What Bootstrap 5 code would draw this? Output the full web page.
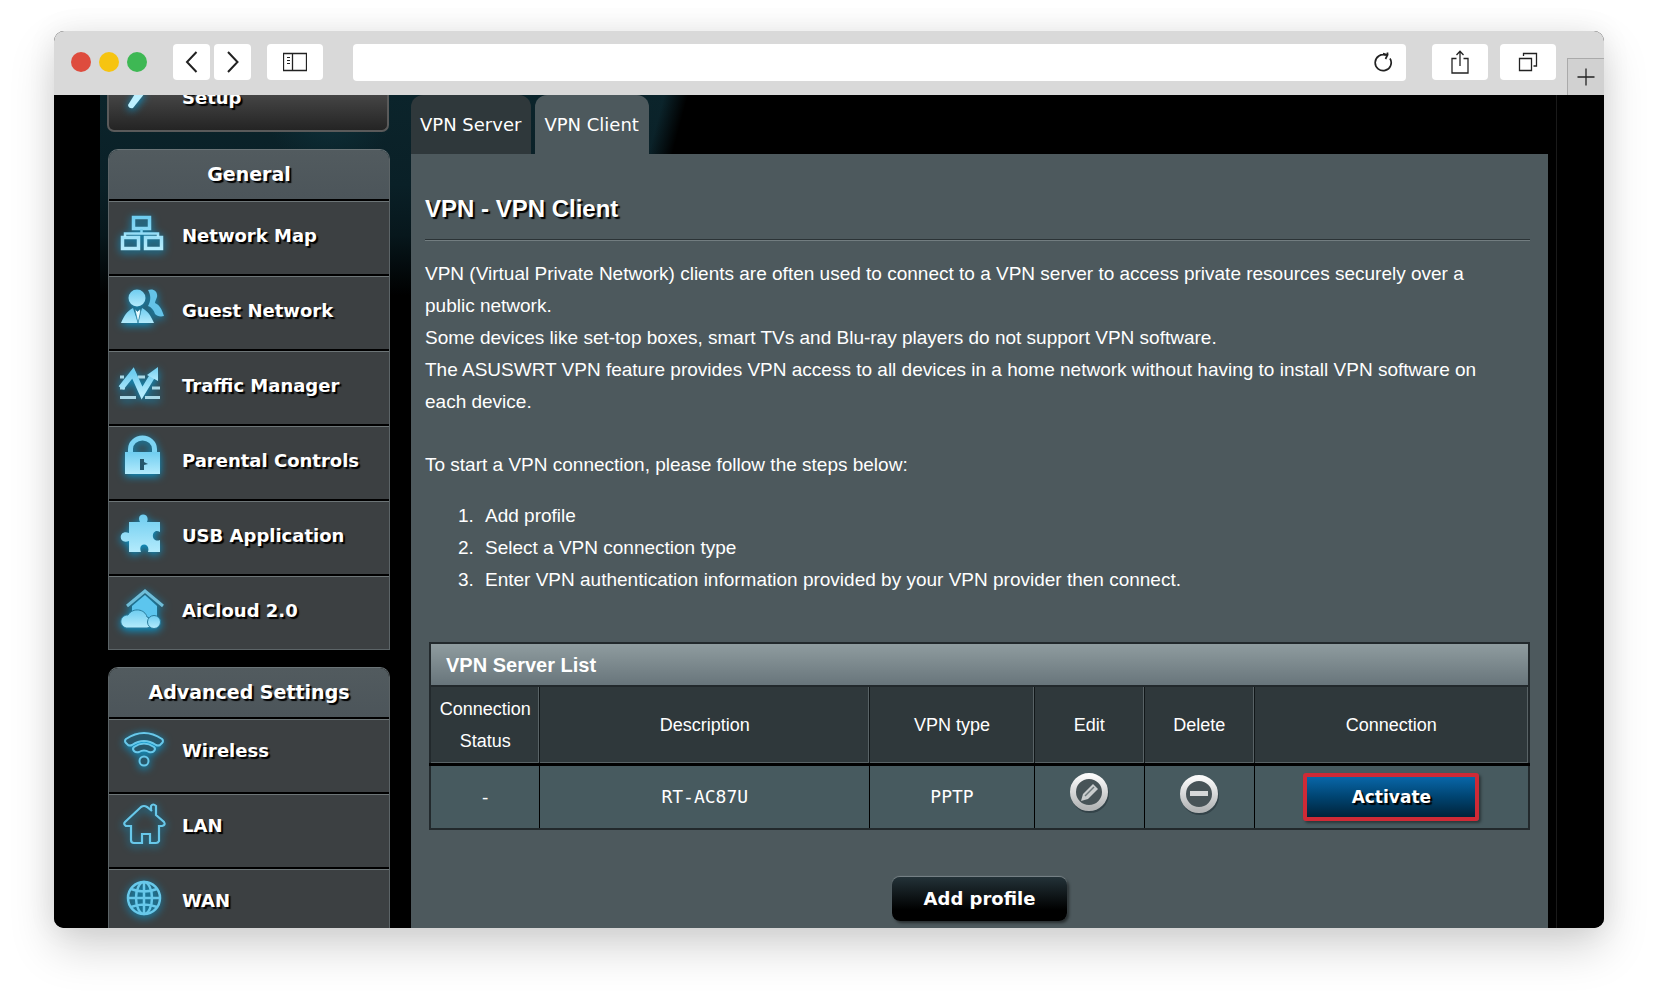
<!DOCTYPE html>
<html lang="en">
<head>
<meta charset="utf-8">
<meta name="viewport" content="width=device-width, initial-scale=1">
<title>VPN - VPN Client</title>
<link href="https://cdn.jsdelivr.net/npm/bootstrap@5.3.0/dist/css/bootstrap.min.css" rel="stylesheet">
<style>
  body { background: #fff; font-family: "Liberation Sans", Arial, sans-serif; height: 100vh; overflow: hidden; }
  .stage { height: 100vh; padding: 31px 54px 78px; }
  .browser { border-radius: 10px; overflow: hidden; background: #000; }
  .browser-shadow { border-radius: 10px; box-shadow: 0 20px 45px rgba(0,0,0,.17), 0 0 30px rgba(0,0,0,.07); height: 100%; }
  .toolbar { background: #d9d9d9; height: 64px; padding: 0 0 2px 17px; }
  .dot { width: 20px; height: 20px; border-radius: 50%; }
  .dot-red { background: #de4c3e; } .dot-yellow { background: #f6c411; } .dot-green { background: #3eb854; }
  .nav-tools { margin-left: 26px; }
  .tool { background: #fff; border: 0; border-radius: 4px; height: 36px; padding: 0; color: #222; display: flex; align-items: center; justify-content: center; }
  .tool-sm { width: 37px; } .tool-lg { width: 56px; }
  .address { height: 37px; background: #fff; border-radius: 4px; margin: 0 26px 0 30px; }
  .address input { border: 0; background: transparent; outline: 0; height: 100%; padding: 0 12px; }
  .address button { border: 0; background: transparent; padding: 0; margin-right: 13px; display: flex; }
  .newtab { width: 37px; height: 37px; margin: 0 0 -2px 11px; background: #d1d1d1; border: solid #aaa; border-width: 1px 0 0 1px; padding: 0; display: flex; align-items: center; justify-content: center; }

  .viewport { background: #000; padding: 0 47px 0 46px; min-height: 0; }
  .page { overflow: hidden; border-right: 1px solid #1a1a1a; padding: 0 8px;
    background:
      linear-gradient(105deg, transparent 545px, #000 568px),
      radial-gradient(ellipse 60px 40px at 230px 30px, #0d2d36, transparent),
      linear-gradient(180deg, #0b242b 0, #0a2027 90px, #07171c 140px, #000 200px); }
  .sidebar { width: 282px; flex: none; margin: -39px 21px 0 0; }
  .menu-block { border: 1px solid #5c6467; border-top-color: #6b7477; border-radius: 10px 10px 0 0; overflow: hidden; }
  .menu-block + .menu-block { margin-top: 17px; }
  .menu-head { background: linear-gradient(#525b5f, #4c555a); color: #fff; font: bold 19px/48px "DejaVu Sans", Verdana, sans-serif; height: 49px; text-align: center; margin: 0; text-shadow: 2px 2px 1px #000; }
  .menu-link { height: 75px; display: flex; align-items: center; background: #3c4042; border-top: 2px solid #000; box-shadow: inset 0 1px #6d7577; color: #fff; text-decoration: none; font: bold 18px/24px "DejaVu Sans", Verdana, sans-serif; text-shadow: 2px 2px 1px #000; padding: 0 0 4px 9px; }
  .menu-link:hover { color: #fff; }
  .menu-link svg { width: 48px; height: 48px; margin: 0 16px 4px 0; flex: none; overflow: visible; filter: drop-shadow(0 2px 4px #0798cf); }
  .menu-advanced .menu-link { padding-bottom: 9px; }
  .setup { height: 76px; margin: 0 1px 17px -1px; border: 2px solid #5a5a5a; border-radius: 0 0 7px 7px; background: linear-gradient(#555 30%, #242424); box-shadow: none; padding: 9px 0 0 9px; border-top: 0; }
  .setup svg { margin-bottom: 14px; }

  .router-tab { background: #2f383b; color: #fff; text-decoration: none; height: 59px; padding: 0 10px 0 9px; border-radius: 12px 12px 0 0; font: 18px/60px "DejaVu Sans", Verdana, sans-serif; white-space: nowrap; }
  .router-tab.current { background: #4d595d; }
  .router-tab:hover { color: #fff; }
  .panel { background: #4d595d; color: #fff; padding: 39px 18px 0 14px; }
  .panel h1 { font-size: 24px; line-height: 32px; font-weight: bold; margin: 0 0 14px; text-shadow: 2px 2px 1px #000; }
  .rule { border-top: 1px solid #2b3336; border-bottom: 1px solid #727d80; margin-bottom: 17px; }
  .copy { font-size: 19px; line-height: 32px; margin-bottom: 31px; padding-right: 20px; }
  .steps { font-size: 19px; line-height: 32px; margin: -12px 0 46px; padding-left: 54px; }
  .steps li { padding-left: 6px; }

  .servers { table-layout: fixed; border-collapse: collapse; margin: 0 0 0 4px; width: calc(100% - 4px); border: 2px solid #22292c; color: #fff; text-align: center; }
  .servers caption { caption-side: top; padding: 0 0 0 15px; height: 43px; color: #fff; font: bold 20px/42px "Liberation Sans", Arial, sans-serif; background: linear-gradient(#8f9c9f, #68757b); border: 2px solid #22292c; border-bottom: 0; text-align: left; }
  .servers th { background: #2f383b; font-weight: normal; font-size: 18px; line-height: 32px; height: 78px; padding: 0; border: 1px solid #111719; box-shadow: inset -1px -1px #596366; }
  .servers td { background: #475a5f; font: 18px/24px "DejaVu Sans Mono", monospace; height: 65px; padding: 0; border: 1px solid #000; border-top-width: 3px; }
  .round-btn { border: 0; background: transparent; padding: 0; width: 44px; height: 44px; }
  .round-btn svg { display: block; }
  .btn-activate { width: 176px; height: 48px; border: 4px solid #cf2a36; border-radius: 3px; background: linear-gradient(#0866a8, #004471 50%, #00233a); color: #fff; font: bold 17px/38px "DejaVu Sans", Verdana, sans-serif; padding: 0; text-shadow: 2px 2px 1px #000; box-shadow: 2px 2px 3px rgba(0,0,0,.4); }
  .add-row { padding-left: 4px; }
  .btn-add { width: 175px; height: 44px; margin-top: 47px; border: 0; border-radius: 8px; background: linear-gradient(#233238, #000 75%); color: #fff; font: bold 18px/44px "DejaVu Sans", Verdana, sans-serif; padding: 0; box-shadow: 0 -1px 1px #7b868a, 2px 2px 3px rgba(0,0,0,.5); }
</style>
<script src="https://cdn.jsdelivr.net/npm/bootstrap@5.3.0/dist/js/bootstrap.bundle.min.js"></script>
</head>
<body>
<svg width="0" height="0" class="position-absolute" aria-hidden="true">
  <defs>
    <linearGradient id="ice" x1="0" y1="0" x2="0" y2="1"><stop offset="0" stop-color="#6fcdf0"/><stop offset="1" stop-color="#b4ebfc"/></linearGradient>
    <linearGradient id="steel" x1="0" y1="0" x2="0" y2="1"><stop offset="0" stop-color="#fafafa"/><stop offset="1" stop-color="#b3b5b6"/></linearGradient>
  </defs>
</svg>
<div class="stage">
<div class="browser-shadow">
<div class="browser d-flex flex-column h-100">
  <header class="toolbar d-flex align-items-center flex-shrink-0">
    <div class="d-flex gap-2">
      <span class="dot dot-red"></span><span class="dot dot-yellow"></span><span class="dot dot-green"></span>
    </div>
    <div class="nav-tools d-flex">
      <button class="tool tool-sm me-1" aria-label="Back"><svg width="14" height="22" fill="none" stroke="#222" stroke-width="2"><path d="M11.500 1 2 11l9.500 10"/></svg></button>
      <button class="tool tool-sm me-3" aria-label="Forward"><svg width="14" height="22" fill="none" stroke="#222" stroke-width="2"><path d="M2 1l9.500 10L2 21"/></svg></button>
      <button class="tool tool-lg" aria-label="Sidebar"><svg width="24" height="20" fill="none" stroke="#222"><path d="M.5 1.500h23v17H.5zM9.500 1.500v17" stroke-width="1.300"/><path d="M4 5.500h3M4 8.500h3M4 11.500h3"/></svg></button>
    </div>
    <div class="address flex-grow-1 d-flex align-items-center">
      <input class="flex-grow-1" type="text" aria-label="Address">
      <button aria-label="Reload"><svg width="20" height="22" fill="none" stroke="#222" stroke-width="1.700"><path d="M17 7.500A8 8 0 1 1 13 4.200M10 2.500l4.500 1.500-2 4M14.500 1.500v3"/></svg></button>
    </div>
    <button class="tool tool-lg me-2" aria-label="Share"><svg width="18" height="24" fill="none" stroke="#222" stroke-width="1.300"><path d="M5.500 8.500H1v14.500h16V8.500h-4.500M9 16V1.500M5.500 5 9 1.200 12.500 5"/></svg></button>
    <button class="tool tool-lg ms-1" aria-label="Show tabs"><svg width="20" height="20" fill="none" stroke="#222" stroke-width="1.300"><path d="M1.500 6.500h12v12h-12zM5.500 4V1.500h13v12.500H15.500"/></svg></button>
    <button class="newtab align-self-end" aria-label="New tab"><svg width="18" height="18" stroke="#222" stroke-width="1.300"><path d="M9 .5v17M.5 9h17"/></svg></button>
  </header>

  <div class="viewport flex-grow-1 d-flex">
    <div class="page flex-grow-1 d-flex">
      <nav class="sidebar" aria-label="Router menu">
        <a href="#" class="menu-link setup"><svg viewBox="0 0 48 48"><path d="M10 38q1 4 5 3L27 26l-7-4z" fill="#bdf0ff"/></svg>Setup</a>
        <div class="menu-block">
          <h2 class="menu-head">General</h2>
          <a href="#" class="menu-link"><svg viewBox="0 0 48 48"><g fill="none" stroke="url(#ice)" stroke-width="3.500"><path d="M15.500 7.500h16v11h-16zM4.500 27.500h16v11h-16zM27.500 27.500h16v11h-16z"/><path d="M23.500 19v5M7 27v-3.500h33V27" stroke-width="2.500"/></g></svg>Network Map</a>
          <a href="#" class="menu-link"><svg viewBox="0 0 48 48"><path d="M30 5c6-2 10 2 9 7-1 3-2 4-2 6 5 2 7 7 9 13-4 1-7 0-9-2-1-4-4-7-7-8 3-5 3-11 0-16z" fill="#64c3e8"/><g fill="url(#ice)"><circle cx="19" cy="13" r="8.500"/><path d="M3 38c3-7 6-12 12-15l5 15zM36 38c-3-7-6-12-12-15l-4 15z"/></g><path d="m17 24 2.500 2.500L22 24l.5 3-2.500 11-2.500-11z" fill="#e8fbff" stroke="#2b7f9f" stroke-width=".7"/></svg>Guest Network</a>
          <a href="#" class="menu-link"><svg viewBox="0 0 48 48"><path d="M2 37.500h16M27 37.500h15M2 28h5M34 28h8M2 17h4M20 17h7" stroke="#a9d8e6" stroke-width="3"/><path d="M3 28 15 13l9 20L35 15" fill="none" stroke="url(#ice)" stroke-width="6"/><path d="m29 15 11-8v14z" fill="url(#ice)"/></svg>Traffic Manager</a>
          <a href="#" class="menu-link"><svg viewBox="0 0 48 48"><path d="M12.500 20v-6a12 11 0 0 1 24 0v6" fill="none" stroke="#7cd3f2" stroke-width="5"/><path d="M7 17h35v22H7z" fill="url(#ice)"/><path d="M22 24h4v3l4 2-4 1v5h-4z" fill="#26576b"/></svg>Parental Controls</a>
          <a href="#" class="menu-link"><svg viewBox="0 0 48 48"><path d="M11 12h11c-5-10 11-10 7 0h13v10c-9-5-10 12 0 8v12H30c3-10-11-10-7 0H11V31c-11 4-11-12 0-8z" fill="url(#ice)"/></svg>USB Application</a>
          <a href="#" class="menu-link"><svg viewBox="0 0 48 48"><path d="m9 21 18-15 18 15" fill="none" stroke="#6fbdd8" stroke-width="3"/><path d="M14 21 27 10l12 11v12H14z" fill="#5cc5ee"/><path d="M8 43c-8-3-6-13 2-13 5-8 17-6 19 2 6 1 6 11 0 11z" fill="url(#ice)" stroke="#287b9c"/><circle cx="36" cy="37" r="6.500" fill="url(#ice)" stroke="#287b9c"/></svg>AiCloud 2.0</a>
        </div>
        <div class="menu-block menu-advanced">
          <h2 class="menu-head">Advanced Settings</h2>
          <a href="#" class="menu-link"><svg viewBox="0 0 48 48"><g fill="#27586c" stroke="#68c8ea" stroke-width="2"><path d="M8 18q-2-2 0-4 18-12 36 0 2 2 0 4l-2 2q-2 1-4 0-12-8-24 0-2 1-4 0z"/><path d="M16 26q-2-2 0-4 10-7 20 0 2 2 0 4-2 2-5 1-5-3-10 0-3 1-5-1z"/><circle cx="26" cy="36" r="4.500"/></g></svg>Wireless</a>
          <a href="#" class="menu-link"><svg viewBox="0 0 48 48"><path d="M33 10V6q2-3 5 0v9l8 7q2 3-2 4h-3v15q-1 2-3 2h-6V34h-8v9h-8q-3 0-3-3V26H8q-3-2-1-4L23 7q3-2 6 0l5 4" fill="none" stroke="#68c8ea" stroke-width="2.200"/></svg>LAN</a>
          <a href="#" class="menu-link"><svg viewBox="0 0 48 48"><g fill="none" stroke="#68c8ea" stroke-width="2.500"><circle cx="26" cy="23" r="16"/><ellipse cx="26" cy="23" rx="8" ry="16"/><path d="M26 7v32M10 23h32M13 14q13 5 26 0M13 32q13-5 26 0"/></g></svg>WAN</a>
        </div>
      </nav>

      <main class="flex-grow-1 d-flex flex-column">
        <div class="d-flex gap-1">
          <a href="#" class="router-tab">VPN Server</a>
          <a href="#" class="router-tab current" aria-current="page">VPN Client</a>
        </div>
        <section class="panel flex-grow-1">
          <h1>VPN - VPN Client</h1>
          <div class="rule"></div>
          <p class="copy">VPN (Virtual Private Network) clients are often used to connect to a VPN server to access private resources securely over a public network.<br>Some devices like set-top boxes, smart TVs and Blu-ray players do not support VPN software.<br>The ASUSWRT VPN feature provides VPN access to all devices in a home network without having to install VPN software on each device.</p>
          <p class="copy">To start a VPN connection, please follow the steps below:</p>
          <ol class="steps">
            <li>Add profile</li>
            <li>Select a VPN connection type</li>
            <li>Enter VPN authentication information provided by your VPN provider then connect.</li>
          </ol>
          <table class="servers">
            <caption>VPN Server List</caption>
            <colgroup><col style="width:10%"><col style="width:30%"><col style="width:15%"><col style="width:10%"><col style="width:10%"><col style="width:25%"></colgroup>
            <thead><tr><th scope="col">Connection Status</th><th scope="col">Description</th><th scope="col">VPN type</th><th scope="col">Edit</th><th scope="col">Delete</th><th scope="col">Connection</th></tr></thead>
            <tbody><tr>
              <td>-</td><td>RT-AC87U</td><td>PPTP</td>
              <td><button class="round-btn" aria-label="Edit"><svg width="44" height="44"><circle cx="23" cy="22" r="16" fill="none" stroke="#26333a" stroke-opacity=".6" stroke-width="6"/><circle cx="22" cy="20" r="16" fill="#475357" stroke="url(#steel)" stroke-width="6"/><path d="m14 29 2-7L26 12l5 5-10 10z" fill="#c9cccd"/><path d="m18 24 9-9" stroke="#6d777a" stroke-width="1.500"/></svg></button></td>
              <td><button class="round-btn" aria-label="Delete"><svg width="44" height="44"><circle cx="23" cy="24" r="16" fill="none" stroke="#26333a" stroke-opacity=".6" stroke-width="6"/><circle cx="22" cy="22" r="16" fill="#475357" stroke="url(#steel)" stroke-width="6"/><path d="M13 19h18v5H13z" fill="#d5d7d8"/></svg></button></td>
              <td><button class="btn-activate">Activate</button></td>
            </tr></tbody>
          </table>
          <div class="add-row text-center"><button class="btn-add">Add profile</button></div>
        </section>
      </main>
    </div>
  </div>
</div>
</div>
</div>
</body>
</html>
